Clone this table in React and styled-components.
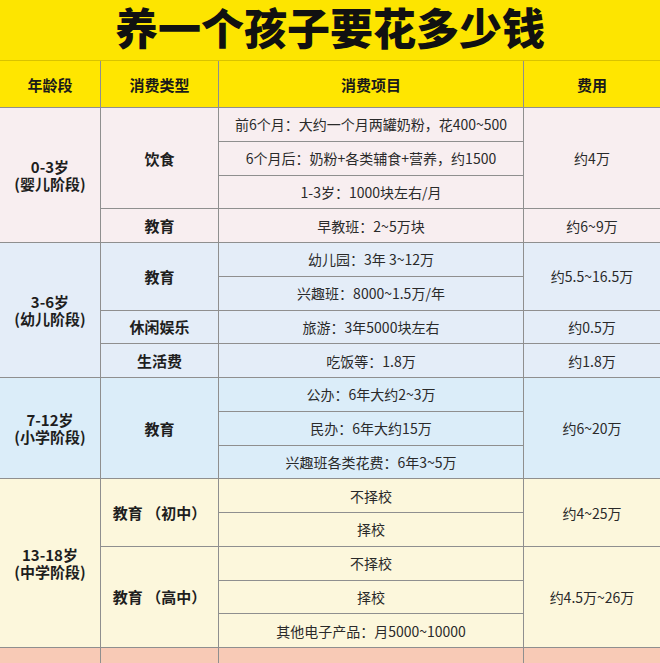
import React from 'react';
import styled, { createGlobalStyle } from 'styled-components';

const GlobalStyle = createGlobalStyle`
  html, body {
    margin: 0;
    padding: 0;
    overflow: hidden;
    background: #ffffff;
  }
  body {
    font-family: "Noto Sans CJK SC", "Noto Sans", sans-serif;
  }
`;

const tones = {
  baby: '#f8eef0',
  kid: '#e4edf8',
  school: '#dbedf9',
  teen: '#fcf7dc',
  college: '#f8cab6',
};

// ---------------------------------------------

const Page = styled.div`
  width: 660px;
  height: 663px;
  overflow: hidden;
  background: #fde500;
`;

const TitleBar = styled.h1`
  margin: 0;
  padding: 0 0 8px;
  line-height: 52px;
  text-align: center;
  font-size: 43px;
  font-weight: 900;
  color: #111;
  background: #fde500;
  border-bottom: 1px solid #d9c300;
`;

// ---------------------------------------------

const Table = styled.div`
  display: grid;
  grid-template-columns: 100px 117px 304px 136px;
  grid-template-rows: 46px;
  grid-auto-rows: 32.75px;
  gap: 1px;
  background: #8f8f8f;
`;

const HeadCell = styled.div`
  display: flex;
  align-items: center;
  justify-content: center;
  background: #ffe600;
  font-size: 15px;
  font-weight: 700;
  color: #1a1a1a;
`;

const Cell = styled.div`
  grid-column: ${p => p.$col};
  grid-row: ${p => p.$row} / span ${p => p.$span || 1};
  display: flex;
  flex-direction: column;
  align-items: center;
  justify-content: center;
  padding-bottom: ${p => p.$lift || 0}px;
  text-align: center;
  background: ${p => tones[p.$tone]};
  font-size: ${p => (p.$bold ? '15px' : '14px')};
  font-weight: ${p => (p.$bold ? 700 : 400)};
  color: ${p => (p.$bold ? '#1e1e1e' : '#2a2a2a')};
  white-space: pre;
`;

const AgeLine = styled.span`
  display: block;
  line-height: 17px;
`;

// ---------------------------------------------

const groups = [
  {
    tone: 'baby',
    start: 2,
    age: ['0-3岁', '(婴儿阶段)'],
    types: [
      { label: '饮食', at: 0, span: 3 },
      { label: '教育', at: 3, span: 1 },
    ],
    items: [
      { label: '前6个月：大约一个月两罐奶粉，花400~500' },
      { label: '6个月后：奶粉+各类辅食+营养，约1500' },
      { label: '1-3岁：1000块左右/月' },
      { label: '早教班：2~5万块' },
    ],
    costs: [
      { label: '约4万', at: 0, span: 3 },
      { label: '约6~9万', at: 3, span: 1 },
    ],
  },
  {
    tone: 'kid',
    start: 6,
    age: ['3-6岁', '(幼儿阶段)'],
    types: [
      { label: '教育', at: 0, span: 2 },
      { label: '休闲娱乐', at: 2, span: 1 },
      { label: '生活费', at: 3, span: 1 },
    ],
    items: [
      { label: '幼儿园：3年 3~12万' },
      { label: '兴趣班：8000~1.5万/年' },
      { label: '旅游：3年5000块左右' },
      { label: '吃饭等：1.8万' },
    ],
    costs: [
      { label: '约5.5~16.5万', at: 0, span: 2 },
      { label: '约0.5万', at: 2, span: 1 },
      { label: '约1.8万', at: 3, span: 1 },
    ],
  },
  {
    tone: 'school',
    start: 10,
    age: ['7-12岁', '(小学阶段)'],
    types: [{ label: '教育', at: 0, span: 3 }],
    items: [
      { label: '公办：6年大约2~3万' },
      { label: '民办：6年大约15万' },
      { label: '兴趣班各类花费：6年3~5万' },
    ],
    costs: [{ label: '约6~20万', at: 0, span: 3 }],
  },
  {
    tone: 'teen',
    start: 13,
    age: ['13-18岁', '(中学阶段)'],
    types: [
      { label: '教育 （初中）', at: 0, span: 2 },
      { label: '教育 （高中）', at: 2, span: 3 },
    ],
    items: [
      { label: '不择校' },
      { label: '择校' },
      { label: '不择校' },
      { label: '择校' },
      { label: '其他电子产品：月5000~10000' },
    ],
    costs: [
      { label: '约4~25万', at: 0, span: 2 },
      { label: '约4.5万~26万', at: 2, span: 3 },
    ],
  },
  {
    tone: 'college',
    start: 18,
    lift: 14,
    age: ['18-22岁', '(大学阶段)'],
    types: [{ label: '教育', at: 0, span: 4 }],
    items: [
      { label: '学费：4年约2~6万', span: 2 },
      { label: '生活费：4年约4~8万', span: 2 },
    ],
    costs: [{ label: '约6~14万', at: 0, span: 4 }],
  },
];

const App = () => {
  return (
    <Page>
      <GlobalStyle />
      <TitleBar>养一个孩子要花多少钱</TitleBar>

      <Table>
        <HeadCell>年龄段</HeadCell>
        <HeadCell>消费类型</HeadCell>
        <HeadCell>消费项目</HeadCell>
        <HeadCell>费用</HeadCell>

        {groups.map(g => {
          let row = g.start;
          const rows = g.items.reduce((n, it) => n + (it.span || 1), 0);
          return (
            <React.Fragment key={g.start}>
              <Cell $tone={g.tone} $col={1} $row={g.start} $span={rows} $lift={g.lift} $bold>
                <AgeLine>{g.age[0]}</AgeLine>
                <AgeLine>{g.age[1]}</AgeLine>
              </Cell>

              {g.types.map(t => (
                <Cell key={'t' + t.at} $tone={g.tone} $col={2} $row={g.start + t.at} $span={t.span} $bold>
                  {t.label}
                </Cell>
              ))}

              {g.items.map((item, i) => {
                const at = row;
                row += item.span || 1;
                return (
                  <Cell key={'i' + i} $tone={g.tone} $col={3} $row={at} $span={item.span}>
                    {item.label}
                  </Cell>
                );
              })}

              {g.costs.map(c => (
                <Cell key={'c' + c.at} $tone={g.tone} $col={4} $row={g.start + c.at} $span={c.span}>
                  {c.label}
                </Cell>
              ))}
            </React.Fragment>
          );
        })}
      </Table>
    </Page>
  );
};

export default App;
